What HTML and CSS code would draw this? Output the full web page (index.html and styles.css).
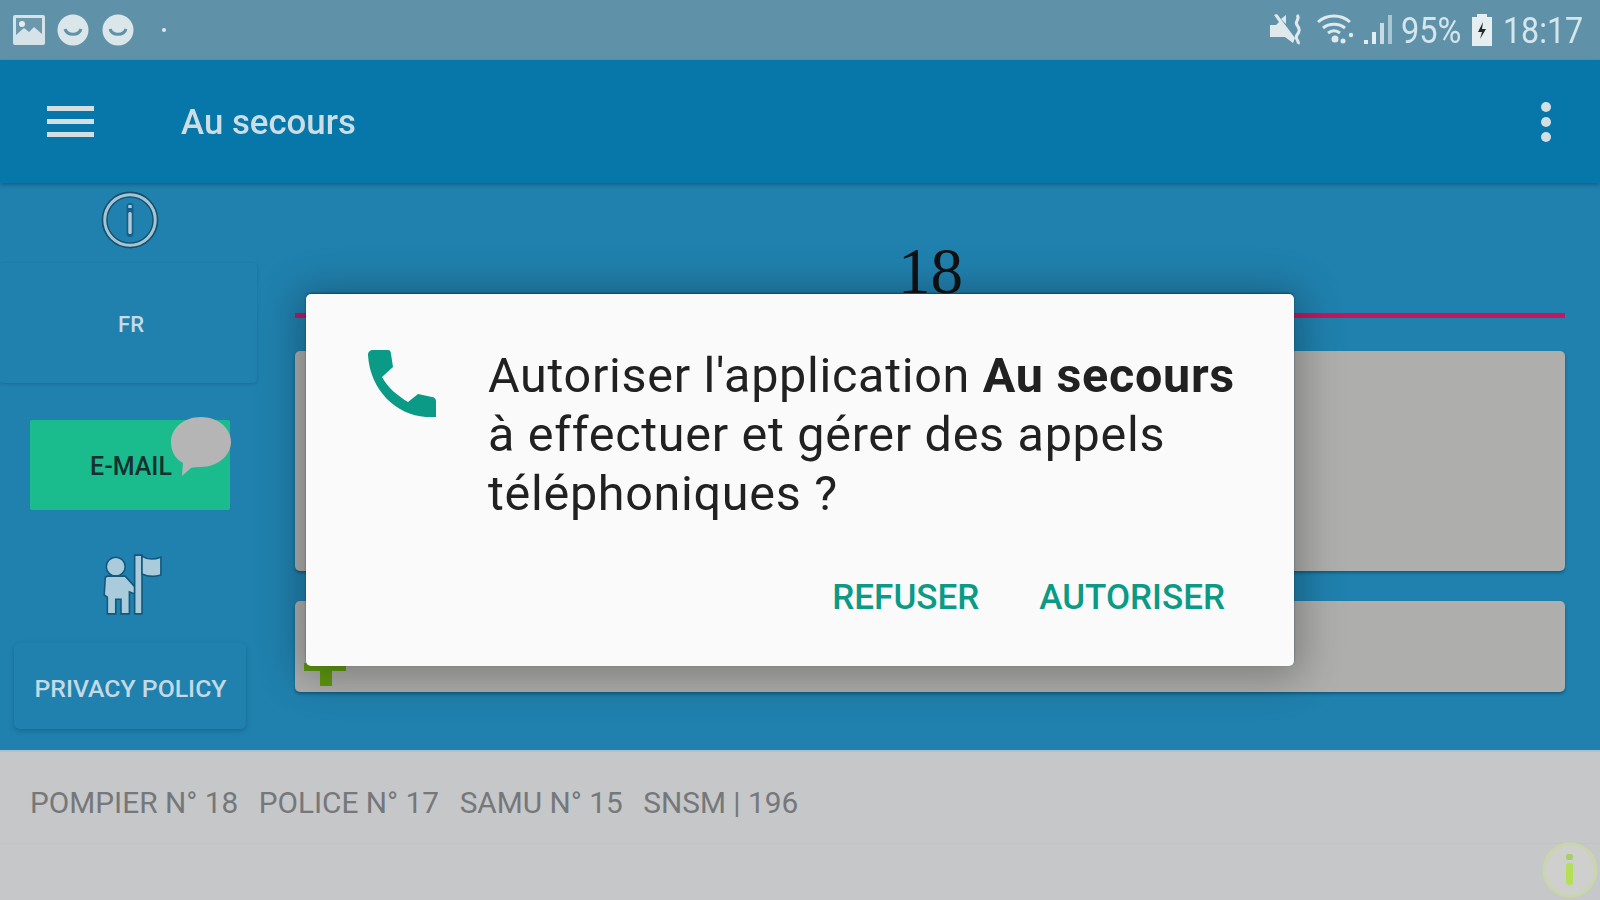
FILE: index.html
```html
<!DOCTYPE html>
<html lang="fr">
<head>
<meta charset="utf-8">
<title>Au secours</title>
<link rel="stylesheet" href="styles.css">
</head>
<body>
<div class="app">
  <header class="status">
    <div class="status-left">
      <svg class="ic-pic" viewBox="0 0 32 30"><rect width="32" height="30" rx="2" fill="#d5e3e8"/><rect x="3" y="3" width="26" height="20" fill="#6d98ab"/><circle cx="9" cy="9" r="3" fill="#e3edf0"/><path d="M3 20l8-7 5 4 5-5 8 7v11H3z" fill="#d5e3e8"/></svg>
      <svg class="ic-smile" viewBox="0 0 32 32"><circle cx="16" cy="16" r="15.5" fill="#dbe6ea"/><path d="M8 15c2 7 14 7 16 0" fill="none" stroke="#5f92a9" stroke-width="3"/></svg>
      <svg class="ic-smile" viewBox="0 0 32 32"><circle cx="16" cy="16" r="15.5" fill="#dbe6ea"/><path d="M8 15c2 7 14 7 16 0" fill="none" stroke="#5f92a9" stroke-width="3"/></svg>
      <span class="ic-dot"></span>
    </div>
    <div class="status-right">
      <svg class="ic-mute" viewBox="0 0 34 34"><path d="M1 12h6l3-3-5-7 3-1 18 24-2 5-4-3-4-3H1z" fill="#dfe9ec"/><path d="M12 6l5-4v9z" fill="#dfe9ec"/><path d="M28 2c4 4-3 6 0 10s3 6 0 10 3 6 1 9" fill="none" stroke="#dfe9ec" stroke-width="3"/></svg>
      <svg class="ic-wifi" viewBox="0 0 40 32"><g fill="none" stroke="#dfe9ec" stroke-width="3"><path d="M1 9c9-8 23-8 32 0"/><path d="M6 15c6-5 16-5 22 0"/><path d="M11 20c4-3 8-3 12 0"/></g><circle cx="18" cy="26" r="3.5" fill="#dfe9ec"/><circle cx="26" cy="28" r="2.5" fill="#dfe9ec"/><circle cx="34" cy="22" r="2.2" fill="#dfe9ec"/></svg>
      <svg class="ic-signal" viewBox="0 0 30 30"><rect class="bar-a" x="1" y="25" width="4" height="4"/><rect class="bar-b" x="9" y="17" width="4" height="12"/><rect class="bar-c" x="17" y="8" width="4" height="21"/><rect class="bar-d" x="25" y="0" width="4" height="29"/></svg>
      <span class="status-text pct">95%</span>
      <svg class="ic-batt" viewBox="0 0 20 32"><path d="M5 0h10v3h5v29H0V3h5z" fill="#e6eef0"/><path d="M11 8l-5 10h4l-2 7 6-10h-4z" fill="#1d2a30"/></svg>
      <span class="status-text clock">18:17</span>
    </div>
  </header>

  <div class="toolbar">
    <div class="burger"><span></span><span></span><span></span></div>
    <h1 class="title">Au secours</h1>
    <div class="kebab"><span></span><span></span><span></span></div>
  </div>

  <main class="main">
    <aside class="side">
      <svg class="ic-info" viewBox="0 0 58 58"><circle cx="29" cy="29" r="27.5" fill="none" stroke="#14506f" stroke-width="1.8"/><circle cx="29" cy="29" r="25.2" fill="none" stroke="#a9c3d0" stroke-width="3"/><circle cx="29" cy="29" r="23" fill="none" stroke="#14506f" stroke-width="1.2"/><rect x="25.5" y="12" width="7" height="34" rx="3.5" fill="#14608a"/><rect x="27.3" y="14" width="3.4" height="3" fill="#b4cbd6"/><rect x="27.3" y="21" width="3.4" height="22" rx="1.5" fill="#b4cbd6"/></svg>
      <div class="lang">FR</div>
      <div class="email">E-MAIL
        <svg class="bubble" viewBox="0 0 62 62"><path d="M31 1c17 0 30 11 30 25S47 51 31 51c-4 0-7 0-10 1l-9 8 1-13C5 43 1 35 1 26 1 12 14 1 31 1z" fill="#b5b5b5"/></svg>
      </div>
      <svg class="ic-flag" viewBox="0 0 60 60"><g fill="#a9cbdc" stroke="#13587c" stroke-width="1.5"><circle cx="15" cy="13" r="9"/><path d="M5 24q0-2 3-2h16l9 10v7l-5-2v21h-8V44h-5v14H7V42l-3-2z"/><path d="M33 2h7v56h-7z"/><path d="M40 3q7 5 18 1v17q-10 3-18-1z"/></g></svg>
      <div class="privacy">PRIVACY POLICY</div>
    </aside>
    <section class="content">
      <div class="number">18</div>
      <div class="rule"></div>
      <div class="card card-a"></div>
      <div class="card card-b"><span class="tee"></span></div>
    </section>
  </main>

  <footer class="footer">
    <div class="numbers">
      <span>POMPIER N° 18</span>
      <span>POLICE N° 17</span>
      <span>SAMU N° 15</span>
      <span>SNSM | 196</span>
    </div>
    <svg class="fab" viewBox="0 0 56 56"><circle cx="28" cy="28" r="26" fill="#cfcfcd" stroke="#c9d6a8" stroke-width="3"/><rect x="24" y="12" width="7" height="6" rx="2" fill="#a6cf6c"/><rect x="24" y="21" width="7" height="22" rx="3" fill="#b3e056"/></svg>
  </footer>

  <div class="dialog" role="dialog">
    <div class="dialog-body">
      <svg class="ic-phone" viewBox="0 0 68 68"><path d="M0 5C0 2 2 0 5 0H20C22 0 23 2 23 4L25 17 14 27C20 38 30 46 40 52L50 44 64 47C66 47 68 49 68 51V67H58C28 65 2 40 0 5Z" fill="#0a9a86"/></svg>
      <p class="dialog-text">Autoriser l'application <b>Au secours</b> à effectuer et gérer des appels téléphoniques ?</p>
    </div>
    <div class="dialog-actions">
      <span class="action">REFUSER</span>
      <span class="action">AUTORISER</span>
    </div>
  </div>
</div>
</body>
</html>
```
FILE: styles.css
```css
* { box-sizing: border-box; }
html, body { margin: 0; padding: 0; }
body { width: 1600px; height: 900px; overflow: hidden; font-family: Roboto, "Liberation Sans", sans-serif; }
.app { position: relative; width: 1600px; height: 900px; display: flex; flex-direction: column; filter: blur(0.7px); overflow: hidden; }

.status { height: 60px; background: #5f92a9; display: flex; justify-content: space-between; align-items: center; padding: 0 17px 0 13px; }
.status-left, .status-right { display: flex; align-items: center; }
.ic-pic { width: 32px; height: 30px; margin-right: 12px; }
.ic-smile { width: 32px; height: 32px; margin-right: 13px; }
.ic-dot { width: 4px; height: 4px; border-radius: 50%; background: #dfe9ec; margin-left: 15px; }
.ic-mute { width: 34px; height: 34px; margin-right: 14px; }
.ic-wifi { width: 40px; height: 32px; margin-right: 6px; margin-top: -2px; }
.ic-signal { width: 30px; height: 30px; margin-right: 8px; }
.bar-a, .bar-b { fill: #e3ecef; }
.bar-c { fill: #c9dbe2; }
.bar-d { fill: #a9c7d3; }
.ic-batt { width: 20px; height: 32px; margin: 0 11px; }
.status-text { color: #d4e5ec; font-size: 37px; font-weight: 400; display: inline-block; transform-origin: left center; white-space: nowrap; }
.pct { width: 60px; transform: scaleX(.88); }
.clock { width: 80px; transform: scaleX(.87); }

.toolbar { height: 123px; background: #0677a8; display: flex; align-items: center; box-shadow: 0 2px 4px rgba(6, 60, 90, .45); position: relative; padding-right: 49px; z-index: 1; }
.burger { width: 47px; margin-left: 47px; display: flex; flex-direction: column; gap: 8px; }
.burger span { display: block; height: 5px; background: #d3dfe3; }
.title { margin: 0 0 0 87px; flex: 1; color: #cddde4; font-size: 34.8px; font-weight: 500; }
.kebab { display: flex; flex-direction: column; gap: 5px; }
.kebab span { width: 10px; height: 10px; border-radius: 50%; background: #d3dfe3; }

.main { height: 567px; background: #2081ae; display: flex; }
.side { width: 262px; padding-top: 8px; display: flex; flex-direction: column; align-items: center; flex: none; }
.ic-info { width: 58px; height: 58px; flex: none; margin-left: -2px; }
.lang { width: 258px; height: 120px; margin: 14px 0 0 -6px; padding: 2px 0 0 6px; flex: none; display: flex; align-items: center; justify-content: center; color: #c5dbe7; font-size: 22px; font-weight: 500; border-radius: 4px; box-shadow: 0 1px 3px rgba(10, 70, 105, .35); }
.email { position: relative; width: 200px; height: 90px; margin: 37px 0 0 -2px; padding: 2px 0 0 2px; flex: none; background: #1abc8e; border-radius: 2px; color: #15302e; font-size: 25px; font-weight: 500; display: flex; align-items: center; justify-content: center; }
.bubble { position: absolute; width: 62px; height: 62px; right: -2px; top: -4px; }
.ic-flag { width: 63px; height: 63px; flex: none; margin: 43px 0 0 0; }
.privacy { width: 232px; height: 86px; margin: 27px 0 0 -3px; padding: 4px 0 0 2px; flex: none; display: flex; align-items: center; justify-content: center; color: #c3d9e4; font-size: 24.8px; font-weight: 500; border-radius: 6px; box-shadow: 0 2px 5px rgba(10, 70, 105, .4); white-space: nowrap; }

.content { flex: 1; padding: 0 35px 0 33px; display: flex; flex-direction: column; }
.number { height: 112px; padding-top: 43px; text-align: center; padding-left: 1px; font-family: "Liberation Serif", serif; font-size: 65px; line-height: 90px; color: #111; white-space: nowrap; }
.rule { height: 5px; background: #c2185f; margin-top: 18px; flex: none; }
.card { background: #aeaeac; border-radius: 5px; box-shadow: 0 2px 3px rgba(6, 60, 90, .55); flex: none; position: relative; }
.card-a { height: 220px; margin-top: 33px; }
.card-b { height: 91px; margin-top: 30px; }
.tee { position: absolute; left: 9px; top: 62px; width: 42px; height: 8px; background: #5f9a10; }
.tee::after { content: ""; position: absolute; left: 16px; top: 0; width: 12px; height: 23px; background: #5f9a10; }

.footer { position: relative; height: 150px; background: #c6c7c9; border-top: 2px solid #a9c4d0; flex: none; }
.numbers { display: flex; gap: 20.5px; height: 92px; padding: 10px 0 0 30px; align-items: center; color: #75777a; font-size: 29.8px; border-bottom: 1px solid #c2c3c5; white-space: nowrap; }
.fab { position: absolute; width: 56px; height: 56px; right: 2px; bottom: 2px; }

.dialog { position: absolute; left: 306px; top: 294px; width: 988px; height: 372px; background: #fafafa; border-radius: 5px; box-shadow: 0 4px 40px 8px rgba(0, 0, 0, .28), 0 -1px 2px rgba(0, 50, 80, .6); padding: 52px 40px 0 62px; display: flex; flex-direction: column; z-index: 2; }
.dialog-body { display: flex; align-items: flex-start; }
.ic-phone { width: 68px; height: 68px; flex: none; margin: 4px 52px 0 0; }
.dialog-text { margin: 0; color: #212121; font-size: 48.5px; line-height: 59px; letter-spacing: .7px; width: 770px; }
.dialog-text b { font-weight: 700; }
.dialog-actions { display: flex; justify-content: flex-end; gap: 60px; margin-top: 54px; padding-right: 29px; }
.action { color: #0a9a86; font-size: 35px; font-weight: 500; }
```
